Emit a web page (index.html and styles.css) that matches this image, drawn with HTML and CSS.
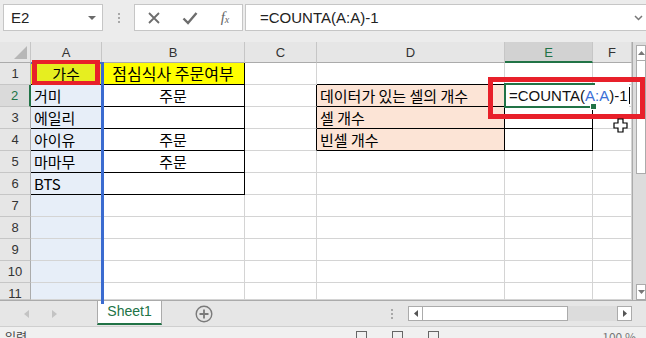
FILE: index.html
```html
<!DOCTYPE html>
<html>
<head>
<meta charset="UTF-8">
<title>COUNTA 예제</title>
<link rel="stylesheet" href="styles.css">
</head>
<body>
<div class="app">

	<!-- 수식 입력줄 -->
	<div class="formula-bar">
		<div class="namebox">E2<span class="caret"></span></div>
		<div class="grip"><i></i><i></i><i></i></div>
		<div class="fx-tools">
			<svg width="14" height="14" viewBox="0 0 14 14"><path d="M2 2 L12 12 M12 2 L2 12" stroke="#6d6d6d" stroke-width="1.8"/></svg>
			<svg width="16" height="14" viewBox="0 0 16 14"><path d="M1.5 7.5 L6 12 L14.5 2" fill="none" stroke="#6d6d6d" stroke-width="2.4"/></svg>
			<span class="fx">f<sub>x</sub></span>
		</div>
		<div class="formula-input">=COUNTA(A:A)-1
			<svg class="chev" width="9" height="6" viewBox="0 0 9 6"><path d="M1 1 L4.5 4.5 L8 1" fill="none" stroke="#777" stroke-width="1.5"/></svg>
		</div>
	</div>

	<!-- 시트 -->
	<div class="sheet-area">
		<div class="grid">
			<div class="corner"><span class="tri"></span></div>
			<div class="ch">A</div>
			<div class="ch">B</div>
			<div class="ch">C</div>
			<div class="ch">D</div>
			<div class="ch sel">E</div>
			<div class="ch">F</div>

			<div class="rh">1</div>
			<div class="c a1 br bb center">가수</div>
			<div class="c yellow br bb center big">점심식사 주문여부</div>
			<div class="c"></div>
			<div class="c bb"></div>
			<div class="c bb"></div>
			<div class="c"></div>

			<div class="rh sel">2</div>
			<div class="c cola br bb">거미</div>
			<div class="c br bb center">주문</div>
			<div class="c br"></div>
			<div class="c peach br bb">데이터가 있는 셀의 개수</div>
			<div class="c br bb"></div>
			<div class="c"></div>

			<div class="rh">3</div>
			<div class="c cola br bb">에일리</div>
			<div class="c br bb"></div>
			<div class="c br"></div>
			<div class="c peach br bb">셀 개수</div>
			<div class="c br bb"></div>
			<div class="c"></div>

			<div class="rh">4</div>
			<div class="c cola br bb">아이유</div>
			<div class="c br bb center">주문</div>
			<div class="c br"></div>
			<div class="c peach br bb">빈셀 개수</div>
			<div class="c br bb"></div>
			<div class="c"></div>

			<div class="rh">5</div>
			<div class="c cola br bb">마마무</div>
			<div class="c br bb center">주문</div>
			<div class="c"></div>
			<div class="c"></div>
			<div class="c"></div>
			<div class="c"></div>

			<div class="rh">6</div>
			<div class="c cola br bb">BTS</div>
			<div class="c br bb"></div>
			<div class="c"></div>
			<div class="c"></div>
			<div class="c"></div>
			<div class="c"></div>

			<div class="rh">7</div>
			<div class="c cola"></div><div class="c"></div><div class="c"></div><div class="c"></div><div class="c"></div><div class="c"></div>
			<div class="rh">8</div>
			<div class="c cola"></div><div class="c"></div><div class="c"></div><div class="c"></div><div class="c"></div><div class="c"></div>
			<div class="rh">9</div>
			<div class="c cola"></div><div class="c"></div><div class="c"></div><div class="c"></div><div class="c"></div><div class="c"></div>
			<div class="rh">10</div>
			<div class="c cola"></div><div class="c"></div><div class="c"></div><div class="c"></div><div class="c"></div><div class="c"></div>
			<div class="rh">11</div>
			<div class="c cola"></div><div class="c"></div><div class="c"></div><div class="c"></div><div class="c"></div><div class="c"></div>
		</div>

		<div class="vscroll">
			<div class="sbtn"><svg width="7" height="4" viewBox="0 0 7 4"><path d="M0 4 L3.5 0 L7 4Z" fill="#777"/></svg></div>
			<div class="vthumb"></div>
			<div class="vtrack"></div>
			<div class="sbtn"><svg width="7" height="4" viewBox="0 0 7 4"><path d="M0 0 L3.5 4 L7 0Z" fill="#777"/></svg></div>
		</div>

		<!-- 참조 범위, 편집 중인 셀, 강조 상자 -->
		<div class="ref-range"></div>
		<div class="edit-cell">=COUNTA(<span class="ref">A:A</span>)-1<span class="caret-line"></span></div>
		<div class="active-cell"><span class="handle"></span></div>
		<div class="mark mark-a1"></div>
		<div class="mark mark-e2"></div>
		<svg class="pointer" width="15" height="15" viewBox="0 0 15 15">
			<path d="M5 1 H10 V5 H14 V10 H10 V14 H5 V10 H1 V5 H5 Z" fill="#fff" stroke="#000" stroke-width="1.2"/>
		</svg>
	</div>

	<!-- 시트 탭 -->
	<div class="tabbar">
		<div class="tab-nav">
			<svg width="5" height="8" viewBox="0 0 5 8"><path d="M5 0 L0 4 L5 8Z" fill="#c3c3c3"/></svg>
			<svg width="5" height="8" viewBox="0 0 5 8"><path d="M0 0 L5 4 L0 8Z" fill="#c3c3c3"/></svg>
		</div>
		<div class="tab">Sheet1</div>
		<div class="tab-add">
			<svg width="18" height="18" viewBox="0 0 18 18"><circle cx="9" cy="9" r="7.8" fill="none" stroke="#7a7a7a" stroke-width="1.4"/><path d="M9 4.5 V13.5 M4.5 9 H13.5" stroke="#7a7a7a" stroke-width="1.8"/></svg>
		</div>
		<div class="split"><i></i><i></i><i></i></div>
		<div class="hscroll">
			<div class="hbtn"><svg width="4" height="7" viewBox="0 0 4 7"><path d="M4 0 L0 3.5 L4 7Z" fill="#555"/></svg></div>
			<div class="hthumb"></div>
			<div class="htrack"></div>
			<div class="hbtn"><svg width="4" height="7" viewBox="0 0 4 7"><path d="M0 0 L4 3.5 L0 7Z" fill="#555"/></svg></div>
		</div>
	</div>

	<!-- 상태 표시줄 -->
	<div class="statusbar">
		<span class="mode">입력</span>
		<span class="views"><i class="v1"></i><i class="v2"></i><i class="v3"></i></span>
		<span class="zoom">100 %</span>
	</div>
</div>
</body>
</html>
```

FILE: styles.css
```css
body {
	margin: 0;
	padding: 0;
	font-family: "Noto Sans CJK KR", "Noto Sans", sans-serif;
	overflow: hidden;
}

.app {
	width: 646px;
	height: 338px;
	display: flex;
	flex-direction: column;
	background: #e6e6e6;
}

/* ---------- 수식 입력줄 ---------- */
.formula-bar {
	height: 42px;
	box-sizing: border-box;
	padding-top: 4px;
	display: flex;
	align-items: flex-start;
	background: #ececec;
}

.namebox {
	width: 100px;
	height: 27px;
	margin-left: 3px;
	box-sizing: border-box;
	border: 1px solid #c6c6c6;
	background: #fff;
	display: flex;
	align-items: center;
	justify-content: space-between;
	padding: 0 6px 0 7px;
	font: 15px "Liberation Sans", Arial, sans-serif;
	color: #222;
}

.caret {
	width: 0;
	height: 0;
	border-left: 4px solid transparent;
	border-right: 4px solid transparent;
	border-top: 4px solid #6a6a6a;
}

.grip {
	width: 31px;
	height: 27px;
	display: flex;
	flex-direction: column;
	align-items: center;
	justify-content: center;
	gap: 2px;
}

.grip i {
	width: 2px;
	height: 2px;
	background: #a8a8a8;
}

.fx-tools {
	width: 109px;
	height: 27px;
	box-sizing: border-box;
	border: 1px solid #c6c6c6;
	background: #fff;
	display: grid;
	grid-template-columns: 37px 36px 34px;
	align-items: center;
	justify-items: center;
}

.fx {
	font: italic 15px "Liberation Serif", serif;
	color: #666;
}

.fx sub {
	font-size: 10px;
	vertical-align: -1px;
}

.formula-input {
	flex: 1;
	height: 27px;
	margin-left: 2px;
	box-sizing: border-box;
	border: 1px solid #c6c6c6;
	border-right: none;
	background: #fff;
	display: flex;
	align-items: center;
	padding-left: 14px;
	font: 15px "Liberation Sans", Arial, sans-serif;
	color: #222;
	position: relative;
}

.chev {
	margin-left: auto;
	margin-right: 3px;
}

/* ---------- 시트 ---------- */
.sheet-area {
	height: 258px;
	display: flex;
	position: relative;
	background: #fff;
}

.grid {
	width: 632px;
	height: 258px;
	overflow: hidden;
	display: grid;
	grid-template-columns: 31px 71px 143px 72px 188px 88px 39px;
	grid-template-rows: 21px repeat(10, 22px) 17px;
}

.grid > div {
	box-sizing: border-box;
	overflow: hidden;
	white-space: nowrap;
}

.corner {
	background: #e6e6e6;
	border-right: 1px solid #c6c6c6;
	border-bottom: 1px solid #ababab;
	position: relative;
}

.tri {
	position: absolute;
	right: 3px;
	bottom: 3px;
	width: 0;
	height: 0;
	border-left: 13px solid transparent;
	border-bottom: 13px solid #b7b7b7;
}

.ch {
	background: #e6e6e6;
	border-right: 1px solid #c6c6c6;
	border-bottom: 1px solid #ababab;
	text-align: center;
	font: 13px/21px "Liberation Sans", Arial, sans-serif;
	color: #333;
}

.ch.sel {
	background: #d2d2d2;
	color: #217346;
	border-bottom: 2px solid #217346;
}

.rh {
	background: #e6e6e6;
	border-right: 1px solid #ababab;
	border-bottom: 1px solid #c6c6c6;
	text-align: center;
	font: 13px/22px "Liberation Sans", Arial, sans-serif;
	color: #333;
}

.rh.sel {
	background: #dadada;
	color: #217346;
	border-right: 2px solid #217346;
}

.c {
	border-right: 1px solid #d4d4d4;
	border-bottom: 1px solid #d4d4d4;
	font-size: 15px;
	line-height: 22px;
	padding-left: 3px;
	color: #000;
}

.c.center {
	text-align: center;
	padding-left: 0;
}

.grid > .c.big {
	font-size: 16px;
	line-height: 21px;
	overflow: visible;
}

.c.br {
	border-right-color: #000;
}

.c.bb {
	border-bottom-color: #000;
}

.cola {
	background: #e7eef8;
}

.a1 {
	background: #e6ee20;
}

.yellow {
	background: #ffff00;
}

.peach {
	background: #fce4d6;
}

/* 오른쪽 세로 스크롤 */
.vscroll {
	width: 14px;
	display: flex;
	flex-direction: column;
	background: #dcdcdc;
	border-left: 1px solid #ababab;
	box-sizing: border-box;
	padding: 3px 0 0 3px;
}

.sbtn {
	height: 14px;
	background: #fff;
	border: 1px solid #ababab;
	display: flex;
	align-items: center;
	justify-content: center;
}

.vthumb {
	height: 112px;
	background: #fff;
	border: 1px solid #ababab;
	border-top: none;
}

.vtrack {
	flex: 1;
}

/* 겹쳐 그리는 요소 */
.ref-range {
	position: absolute;
	left: 31px;
	top: 20px;
	width: 70px;
	height: 240px;
	border-top: 2px solid #4472c4;
	border-right: 3px solid #3a6bd0;
}

.edit-cell {
	position: absolute;
	left: 505px;
	top: 42px;
	width: 124px;
	height: 23px;
	box-sizing: border-box;
	background: #fff;
	padding-left: 4px;
	font: 15px/23px "Liberation Sans", Arial, sans-serif;
	color: #111;
	display: flex;
	align-items: center;
}

.ref {
	color: #3b6fd6;
}

.caret-line {
	width: 1px;
	height: 17px;
	background: #000;
	margin-left: 1px;
}

.active-cell {
	position: absolute;
	left: 504px;
	top: 41px;
	width: 91px;
	height: 25px;
	box-sizing: border-box;
	border: 2px solid #217346;
	border-right: none;
}

.handle {
	position: absolute;
	right: -2px;
	bottom: -4px;
	width: 5px;
	height: 5px;
	background: #217346;
	border: 1px solid #fff;
}

.mark {
	position: absolute;
	border: 4px solid #e8202a;
	box-sizing: border-box;
}

.mark-a1 {
	left: 32px;
	top: 18px;
	width: 68px;
	height: 25px;
	border-width: 4px 5px;
}

.mark-e2 {
	left: 488px;
	top: 35px;
	width: 157px;
	height: 42px;
	border-width: 5px;
}

.pointer {
	position: absolute;
	left: 613px;
	top: 76px;
}

/* ---------- 시트 탭 ---------- */
.tabbar {
	height: 27px;
	display: flex;
	align-items: stretch;
	background: #e6e6e6;
	border-top: 1px solid #ababab;
	box-sizing: border-box;
	border-bottom: 1px solid #cfcfcf;
}

.tab-nav {
	width: 97px;
	display: flex;
	align-items: center;
	gap: 23px;
	padding-left: 24px;
	box-sizing: border-box;
}

.tab {
	width: 65px;
	margin-top: -1px;
	height: 25px;
	box-sizing: border-box;
	background: #fff;
	border: 1px solid #ababab;
	border-bottom: 2px solid #217346;
	text-align: center;
	font: 14px/21px "Liberation Sans", Arial, sans-serif;
	color: #217346;
}

.tab-add {
	width: 84px;
	display: flex;
	align-items: center;
	padding-left: 33px;
	box-sizing: border-box;
}

.split {
	width: 162px;
	display: flex;
	flex-direction: column;
	align-items: flex-end;
	justify-content: center;
	gap: 2px;
	padding-right: 15px;
	box-sizing: border-box;
}

.split i {
	width: 2px;
	height: 2px;
	background: #a8a8a8;
}

.hscroll {
	width: 224px;
	display: flex;
	align-items: center;
}

.hbtn {
	width: 13px;
	height: 13px;
	background: #fff;
	border: 1px solid #ababab;
	display: flex;
	align-items: center;
	justify-content: center;
}

.hthumb {
	width: 144px;
	height: 13px;
	background: #fff;
	border: 1px solid #ababab;
	border-left: none;
}

.htrack {
	flex: 1;
	height: 15px;
	background: #dcdcdc;
}

/* ---------- 상태 표시줄 ---------- */
.statusbar {
	height: 11px;
	background: #f0f0f0;
	overflow: hidden;
	display: flex;
	align-items: flex-start;
	font-size: 12px;
	color: #444;
}

.mode {
	padding: 3px 0 0 5px;
	line-height: 14px;
}

.views {
	display: flex;
	gap: 25px;
	margin-left: 329px;
	padding-top: 4px;
}

.views i {
	width: 11px;
	height: 10px;
	border: 1px solid #666;
	box-sizing: border-box;
}

.zoom {
	margin-left: auto;
	margin-right: 10px;
	padding-top: 3px;
	line-height: 14px;
	color: #777;
}
```
